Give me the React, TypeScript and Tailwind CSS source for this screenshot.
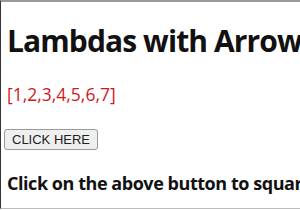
export default function App() {
  return (
    <div className="w-[300px] h-[210px] overflow-hidden bg-white">
      <div className="h-[209px] border-t-2 border-t-[#9a9a9a] border-l border-l-[#333] border-b border-b-[#bbb] pl-[6px] font-['Open_Sans',sans-serif] whitespace-nowrap">
        <h1 className="mt-[19px] text-[30px] leading-[40px] font-bold tracking-[-0.9px] text-[#111]">Lambdas with Arrow Functions</h1>
        <p className="mt-[22px] text-[17.5px] leading-[22px] text-[#d0191b]">[1,2,3,4,5,6,7]</p>
        <button className="mt-[24px] -ml-[3px] h-[21px] px-[7px] border border-[#999] rounded-[3px] bg-[#efefef] text-[13px] leading-[19px] text-[#222] font-['Liberation_Sans',sans-serif]">CLICK HERE</button>
        <p className="mt-[21px] text-[18px] leading-[24px] font-bold tracking-[-0.45px] text-[#111]">Click on the above button to square the numbers</p>
      </div>
    </div>
  );
}
